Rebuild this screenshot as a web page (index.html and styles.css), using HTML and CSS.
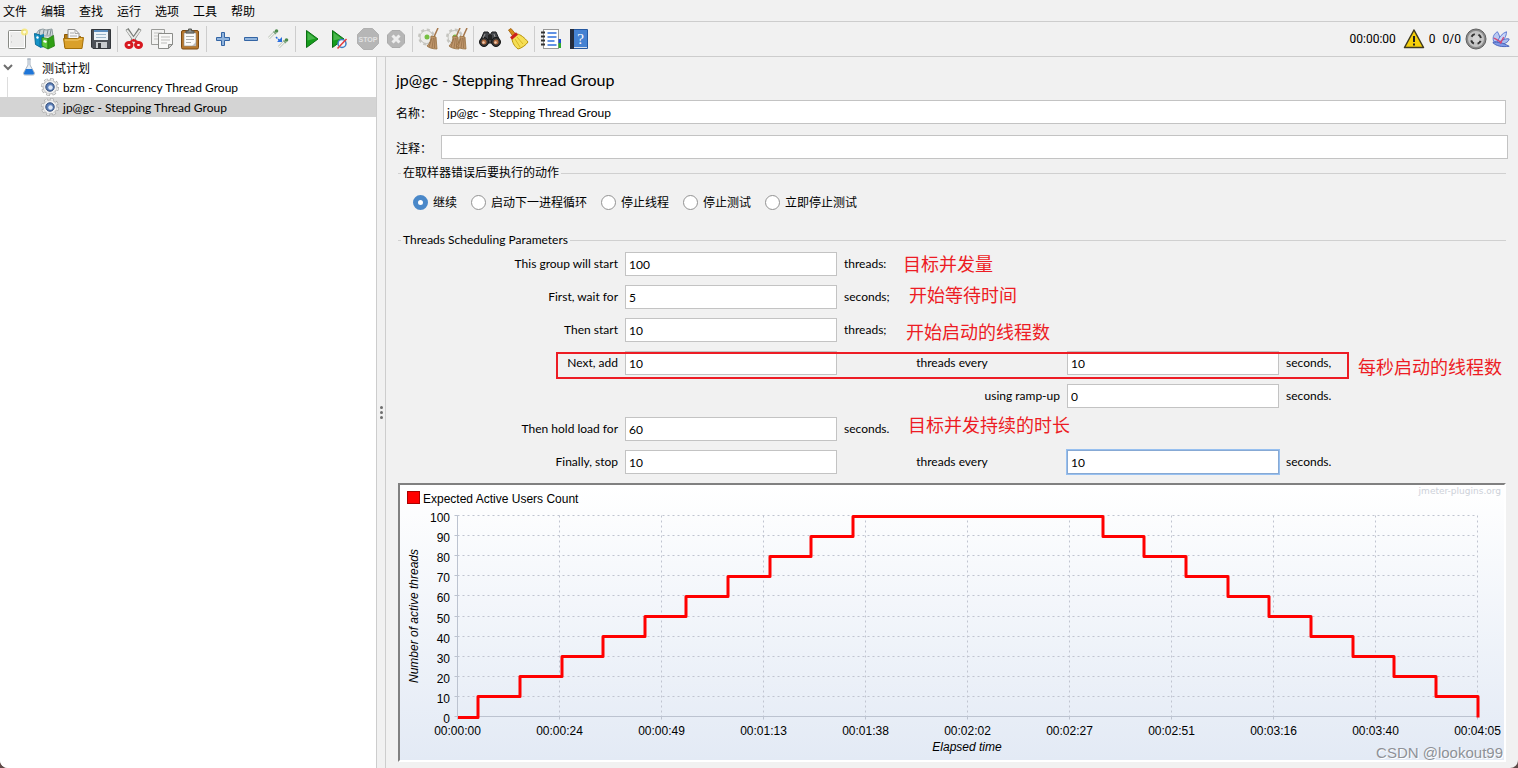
FILE: index.html
```html
<!DOCTYPE html>
<html lang="zh-CN">
<head>
    <meta charset="UTF-8">
    <meta name="viewport" content="width=device-width, initial-scale=1.0">
    <title>Apache JMeter</title>
    <link rel="stylesheet" href="styles.css">
</head>
<body>
    <div class="app">
        <nav class="menu-bar">
            <button>文件</button>
            <button>编辑</button>
            <button>查找</button>
            <button>运行</button>
            <button>选项</button>
            <button>工具</button>
            <button>帮助</button>
        </nav>

        <div class="toolbar">
            <button class="tool" aria-label="New">
                <svg viewBox="0 0 22 22"><rect x="2.500" y="2.500" width="17" height="18" rx="1" fill="#ececeb" stroke="#888a85"/><path d="M3.500 3.500h15v16h-15z" fill="none" stroke="#fff"/><path d="M5 8h1M5 14h1" stroke="#bbb"/><circle cx="18.500" cy="4" r="3.500" fill="#f7e66a" opacity=".8"/><circle cx="18.500" cy="4" r="1.500" fill="#fffde0"/></svg>
            </button>
            <button class="tool" aria-label="Templates">
                <svg viewBox="0 0 22 22"><path d="M2 6l3-4 4-1 3 1 6-1 1 7H3z" fill="#cdd6da" stroke="#7d8b91" stroke-width=".8"/><path d="M6 2l-1 5M10 2L9 7M14 2l-1 5M17 2l-1 5" stroke="#7d8b91"/><path d="M.500 5.500L6 7v12l-4.500-2.500z" fill="#1494c8" stroke="#0a6c98"/><path d="M6 7l4-1v13l-4 1z" fill="#0c7fae"/><path d="M8 9.500l6 1v10.500l-6-3z" fill="#5ccb3b" stroke="#267d10" stroke-width=".8"/><path d="M14 10.500l5.500-3L20.500 18 14 21z" fill="#2f9f14" stroke="#267d10" stroke-width=".8"/><path d="M2.500 9l2 1M9.500 13l3 1" stroke="#fff" stroke-width="2"/></svg>
            </button>
            <button class="tool" aria-label="Open">
                <svg viewBox="0 0 22 22"><path d="M2.500 19V6.500h5l1 2h10V19z" fill="#b37a10" stroke="#8f5902"/><path d="M6 12V1.500h7l4 4V12z" fill="#f7f7f7" stroke="#8e8e8e"/><path d="M13 1.500v4h4M8 5h4M8 8h7" stroke="#aaa" fill="none"/><path d="M1.500 10.500h14l2-1h4l-1.500 11h-17z" fill="#daa02a" stroke="#a4700a"/><path d="M3 12h13l2-1h2" stroke="#f5cd72" fill="none"/></svg>
            </button>
            <button class="tool" aria-label="Save">
                <svg viewBox="0 0 22 22"><path d="M1.500 1.500h19v19H3l-1.500-1.500z" fill="#4d5157" stroke="#33363a"/><rect x="4" y="2" width="14" height="10" fill="#edf3f8"/><path d="M4 3h14" stroke="#5d8fc0" stroke-width="2"/><path d="M6 6.500h10M6 9.500h10" stroke="#9db6ca"/><rect x="6" y="14" width="11" height="6" fill="#c9ccce"/><rect x="8" y="15" width="3" height="5" fill="#3b3e42"/></svg>
            </button>
            <span class="tool-sep"></span>
            <button class="tool" aria-label="Cut">
                <svg viewBox="0 0 22 22"><path d="M4 1l8 12M17 1L9 13" stroke="#777a76" stroke-width="3.500"/><path d="M4 2l8 11M17 2L9 13" stroke="#e8e9e7" stroke-width="2"/><ellipse cx="6" cy="17" rx="3" ry="2.500" fill="#fff" stroke="#d71920" stroke-width="3"/><ellipse cx="15.500" cy="17" rx="3" ry="2.500" fill="#fff" stroke="#d71920" stroke-width="3"/><path d="M7 14l3.500-2 4 2" stroke="#d71920" stroke-width="2" fill="none"/></svg>
            </button>
            <button class="tool" aria-label="Copy">
                <svg viewBox="0 0 22 22"><path d="M.500 1.500h13v15H.500z" fill="#f2f2f1" stroke="#9a9b98"/><path d="M3 5h8M3 8h4M3 11h4" stroke="#c2c2c0"/><path d="M7.500 5.500h14v11l-4 4h-10z" fill="#f8f8f7" stroke="#8b8c89"/><path d="M10 9h9M10 12h9M10 15h6" stroke="#bdbdbb"/><path d="M21.500 16.500h-4v4z" fill="#ccc" stroke="#8b8c89"/></svg>
            </button>
            <button class="tool" aria-label="Paste">
                <svg viewBox="0 0 22 22"><rect x="2.500" y="2.500" width="17" height="18.500" rx="1.500" fill="#b8782d" stroke="#7a4a12"/><path d="M5 5h12v13H5z" fill="#fbfbfa" stroke="#8e8f8c" stroke-width=".6"/><path d="M7 8.500h8M7 11.500h8M7 14.500h5" stroke="#aeb0ad"/><path d="M17 14v4h-4z" fill="#bbb"/><path d="M7 5V3h2.500V1h3v2H15v2z" fill="#8b8e88" stroke="#555753"/></svg>
            </button>
            <span class="tool-sep"></span>
            <button class="tool" aria-label="Expand all">
                <svg viewBox="0 0 22 22"><path d="M9.500 4.500h3v5h5v3h-5v5h-3v-5h-5v-3h5z" fill="#8fb3dc" stroke="#3465a4"/></svg>
            </button>
            <button class="tool" aria-label="Collapse all">
                <svg viewBox="0 0 22 22"><path d="M4.500 9.500h13v3h-13z" fill="#8fb3dc" stroke="#3465a4"/></svg>
            </button>
            <button class="tool" aria-label="Toggle">
                <svg viewBox="0 0 22 22"><use href="#pipette"/><use href="#pipette" x="10" y="9"/><path d="M8 9l4 4" stroke="#2a6ede" stroke-width="1.500" stroke-dasharray="2 1"/><path d="M14 9v5H9z" fill="#2a6ede"/></svg>
            </button>
            <span class="tool-sep"></span>
            <button class="tool" aria-label="Start">
                <svg viewBox="0 0 22 22"><path d="M5.500 2.500L17 11 5.500 19.500z" fill="#169c1c" stroke="#0b6e12"/><path d="M6.500 4.500l8 6-8 2z" fill="#48b64b"/></svg>
            </button>
            <button class="tool" aria-label="Start no pauses">
                <svg viewBox="0 0 22 22"><path d="M3.500 2.500L15 11 3.500 19.500z" fill="#169c1c" stroke="#0b6e12"/><path d="M4.500 4.500l8 6-8 2z" fill="#48b64b"/><circle cx="13" cy="15.500" r="4" fill="#f3f7fc" stroke="#3d7fc4" stroke-width="1.500"/><path d="M8.500 20.500l9-9.500" stroke="#e23b3b" stroke-width="1.500"/></svg>
            </button>
            <button class="tool" aria-label="Stop" disabled>
                <svg viewBox="0 0 22 22"><path d="M6.500.500h9l6 6v9l-6 6h-9l-6-6v-9z" fill="#b6b6b6" stroke="#b0b0b0"/><text x="11" y="14" class="stop-text">STOP</text></svg>
            </button>
            <button class="tool" aria-label="Shutdown" disabled>
                <svg viewBox="0 0 22 22"><path d="M7 2.500h8l4.500 4.500v8L15 19.500H7L2.500 15V7z" fill="#b6b6b6" stroke="#ababab"/><path d="M7.500 7.500l7 7M14.500 7.500l-7 7" stroke="#ededed" stroke-width="3"/></svg>
            </button>
            <span class="tool-sep"></span>
            <button class="tool" aria-label="Clear">
                <svg viewBox="0 0 22 22"><use href="#gear-grey"/><use href="#twigs"/></svg>
            </button>
            <button class="tool" aria-label="Clear all">
                <svg viewBox="0 0 22 22"><use href="#gear-grey"/><use href="#twigs" x="-6"/><use href="#twigs" x="1"/></svg>
            </button>
            <span class="tool-sep"></span>
            <button class="tool" aria-label="Search">
                <svg viewBox="0 0 22 22"><path d="M2 11l3-7h4l2 3 2-3h4l3 7v4H2z" fill="#44464a" stroke="#1e1f21"/><path d="M9 7h4v5H9z" fill="#222"/><circle cx="5" cy="14" r="4.500" fill="#333" stroke="#151515"/><circle cx="17" cy="14" r="4.500" fill="#333" stroke="#151515"/><circle cx="5" cy="14" r="2.500" fill="#b06a40"/><circle cx="17" cy="14" r="2.500" fill="#b06a40"/><circle cx="4.500" cy="14.500" r="1.200" fill="#f0cdb2"/><circle cx="16.500" cy="14.500" r="1.200" fill="#f0cdb2"/><path d="M6 6l-2 4M15 6l1 3" stroke="#999"/></svg>
            </button>
            <button class="tool" aria-label="Reset search">
                <svg viewBox="0 0 22 22"><path d="M1.500 2L4 .500l5 6-3 2z" fill="#d88b1c" stroke="#9a5b06" stroke-width=".8"/><path d="M5 10c2-1 4-3 5-4 3 0 8 4 11 8-2 3-6 6-10 7-4-3-6-7-6-11z" fill="#f5de55" stroke="#b79308"/><path d="M4 10.500l6-5" stroke="#cc1f1f" stroke-width="3"/><path d="M8 11l5 8M10 9l6 7" stroke="#d8b826"/></svg>
            </button>
            <span class="tool-sep"></span>
            <button class="tool" aria-label="Function helper">
                <svg viewBox="0 0 22 22"><rect x="3.500" y="1.500" width="15" height="19" fill="#fff" stroke="#999"/><path d="M18.500 11h2.500v4h-2.500z" fill="#1d4fd0"/><path d="M18.500 15h2.500v5h-2.500z" fill="#2da82d"/><path d="M7.500 5h9M7.500 9h9M7.500 13h7M7.500 17h9" stroke="#2f6fdc" stroke-width="1.500"/><path d="M1 4.500h4M1 8.500h4M1 12.500h4M1 16.500h4" stroke="#333" stroke-width="2"/></svg>
            </button>
            <button class="tool" aria-label="Help">
                <svg viewBox="0 0 22 22"><path d="M2.500 1.500h17v19h-17z" fill="#4582d2" stroke="#2558a0"/><path d="M2 1h4v20H2z" fill="#242c3c"/><path d="M6 19.500h13" stroke="#d7e0ee"/><text x="12.500" y="16" class="help-text">?</text></svg>
            </button>

            <div class="status">
                <span class="clock">00:00:00</span>
                <button class="warn" aria-label="Log errors">
                    <svg viewBox="0 0 22 22"><path d="M11 2L1.500 19.500h19z" fill="#f5cf0a" stroke="#3f3a20" stroke-width="1.500" stroke-linejoin="round"/><path d="M11 8v6M11 15.500v2" stroke="#222" stroke-width="2"/></svg>
                    <span>0</span>
                </button>
                <span>0/0</span>
                <svg class="status-icon" viewBox="0 0 22 22"><circle cx="11" cy="11" r="10" fill="#8a8a8a" stroke="#606060"/><circle cx="11" cy="11" r="8" fill="#c4c4c4"/><circle cx="11" cy="11" r="5" fill="none" stroke="#333" stroke-width="2" stroke-dasharray="4 3.850" stroke-dashoffset="-2"/><circle cx="11" cy="11" r="3.500" fill="#d4d4d4"/></svg>
                <svg class="status-icon small" viewBox="0 0 22 22"><path d="M3 14C1 8 4 5 7 3c2 3 3 6 3 10z" fill="#b9c9f2" stroke="#5271cf"/><path d="M7 14c2-5 5-9 10-11 0 5-2 8-7 12z" fill="#c8d5f7" stroke="#5271cf"/><path d="M8 15c4-3 9-5 12-4-1 4-6 6-11 6z" fill="#a9bcef" stroke="#4a67c4"/><path d="M2 15c5-1 11 0 18 4-8 1-14 0-18-4z" fill="#7e9be8" stroke="#4560b8"/><path d="M3 10c3 1 5 3 9 5M14 9l-4 7" stroke="#d24a78" fill="none" stroke-width="1.500"/></svg>
            </div>
        </div>

        <!-- shared icon parts -->
        <svg class="defs">
            <defs>
                <g id="pipette"><path d="M1 10l6-6" stroke="#b4beb1" stroke-width="2.500"/><path d="M1 10l6-6" stroke="#f3f6f1" stroke-width="1.200"/><path d="M5.500 3.500l2.500 2.500" stroke="#7ba37c" stroke-width="1.500"/><circle cx="8.500" cy="3" r="1.800" fill="#4c8b4c"/></g>
                <g id="gear-grey"><circle cx="8.500" cy="9" r="7" fill="none" stroke="#c6c6c1" stroke-width="3" stroke-dasharray="3 2.500"/><circle cx="8.500" cy="9" r="6.500" fill="#ededea" stroke="#c2c2bd"/><circle cx="9" cy="9" r="2.500" fill="#76c043"/></g>
                <g id="twigs"><path d="M20 0l-4 9" stroke="#a5764a" stroke-width="1.500"/><path d="M13 8l5 1 1 12c-4 0-8-1-10-3 3-3 4-6 4-10z" fill="#bf966b" stroke="#97703f" stroke-width=".8"/><path d="M14 10l-3 9M15.500 10l-1.500 10M17 10l-.500 10" stroke="#8a6540" stroke-width=".6"/></g>
                <g id="gear"><circle cx="9" cy="9" r="7.500" fill="none" stroke="#a2a2a2" stroke-width="3" stroke-dasharray="3.400 2.490"/><circle cx="9" cy="9" r="7" fill="#efefef" stroke="#b5b5b5"/><circle cx="9" cy="9" r="7.500" fill="none" stroke="#e9e9e9" stroke-width="2" stroke-dasharray="2.400 3.490" stroke-dashoffset="-.5"/><circle cx="9" cy="9" r="4.200" fill="#5f82ba" stroke="#2f4a78"/><circle cx="9.500" cy="9.500" r="2.200" fill="#dfe9f8"/></g>
                <linearGradient id="chart-bg" x1="0" y1="0" x2="0" y2="1"><stop offset="0" stop-color="#fff"/><stop offset="1" stop-color="#e3eaf5"/></linearGradient>
            </defs>
        </svg>

        <div class="workspace">
            <aside class="tree">
                <div class="tree-row root">
                    <svg class="chevron" viewBox="0 0 10 10"><path d="M1 3l4 4 4-4" fill="none" stroke="#6e6e6e" stroke-width="2"/></svg>
                    <svg class="tree-icon" viewBox="0 0 18 18"><path d="M7 1h4M8 1v6L3.500 15c0 1 0 2 2 2h7c2 0 2-1 2-2L10 7V1z" fill="#e8eef5" stroke="#a9b4c0"/><path d="M6 11h6l2 4c0 1-.500 1.500-2 1.500H6c-2 0-2-.500-2-1.500z" fill="#1f76d8"/></svg>
                    <span>测试计划</span>
                </div>
                <div class="tree-row child">
                    <svg class="tree-icon" viewBox="0 0 18 18"><use href="#gear"/></svg>
                    <span>bzm - Concurrency Thread Group</span>
                </div>
                <div class="tree-row child selected">
                    <svg class="tree-icon" viewBox="0 0 18 18"><use href="#gear"/></svg>
                    <span>jp@gc - Stepping Thread Group</span>
                </div>
            </aside>

            <div class="splitter"><i></i><i></i><i></i></div>

            <main class="editor">
                <h1>jp@gc - Stepping Thread Group</h1>
                <div class="field name-field">
                    <label for="name">名称：</label>
                    <input type="text" id="name" value="jp@gc - Stepping Thread Group">
                </div>
                <div class="field comment-field">
                    <label for="comment">注释：</label>
                    <input type="text" id="comment">
                </div>

                <fieldset>
                    <legend>在取样器错误后要执行的动作</legend>
                    <div class="on-error">
                        <label><input type="radio" name="on-error" checked>继续</label>
                        <label><input type="radio" name="on-error">启动下一进程循环</label>
                        <label><input type="radio" name="on-error">停止线程</label>
                        <label><input type="radio" name="on-error">停止测试</label>
                        <label><input type="radio" name="on-error">立即停止测试</label>
                    </div>
                </fieldset>

                <fieldset>
                    <legend>Threads Scheduling Parameters</legend>
                    <div class="params">
                        <label class="lead" for="total">This group will start</label>
                        <input type="text" id="total" value="100">
                        <span class="unit">threads:<b class="note note-total">目标并发量</b></span>

                        <label class="lead" for="delay">First, wait for</label>
                        <input type="text" id="delay" value="5">
                        <span class="unit">seconds;<b class="note note-delay">开始等待时间</b></span>

                        <label class="lead" for="burst">Then start</label>
                        <input type="text" id="burst" value="10">
                        <span class="unit">threads;<b class="note note-burst">开始启动的线程数</b></span>

                        <div class="highlight"></div>
                        <label class="lead" for="add">Next, add</label>
                        <input type="text" id="add" value="10">
                        <label class="mid" for="add-every">threads every</label>
                        <input type="text" id="add-every" value="10">
                        <span class="unit last">seconds,<b class="note note-add">每秒启动的线程数</b></span>

                        <label class="mid ramp" for="ramp">using ramp-up</label>
                        <input type="text" id="ramp" value="0">
                        <span class="unit last">seconds.</span>

                        <label class="lead" for="hold">Then hold load for</label>
                        <input type="text" id="hold" value="60">
                        <span class="unit">seconds.<b class="note note-hold">目标并发持续的时长</b></span>

                        <label class="lead" for="stop">Finally, stop</label>
                        <input type="text" id="stop" value="10">
                        <label class="mid" for="stop-every">threads every</label>
                        <input type="text" id="stop-every" class="focused" value="10">
                        <span class="unit last">seconds.</span>
                    </div>
                </fieldset>

                <div class="chart">
                    <svg viewBox="0 0 1104 275">
                        <rect width="1104" height="275" fill="url(#chart-bg)"/>
                        <rect x="7.500" y="6.500" width="12" height="12" fill="red" stroke="#a00"/>
                        <text x="23" y="18">Expected Active Users Count</text>
                        <text class="brand" x="1101" y="9">jmeter-plugins.org</text>
                        <text class="axis-title" transform="translate(18 131) rotate(-90)">Number of active threads</text>
                        <text class="axis-title" x="567" y="266">Elapsed time</text>
                        <g id="grid"></g>
                        <path id="series" class="series"/>
                    </svg>
                </div>
                <div class="watermark">CSDN @lookout99</div>
            </main>
        </div>
    </div>

    <script>
        const left = 57.5, right = 1077.5, top0 = 30.5, bottom = 231.5;
        const duration = 245;

        function xAt(t) {
            return Math.round(left + (right - left) * t / duration);
        }

        function yAt(n) {
            return Math.round(bottom - (bottom - top0) * n / 100) + 0.5;
        }

        function drawGrid() {
            const times = ['00:00:00', '00:00:24', '00:00:49', '00:01:13', '00:01:38', '00:02:02',
                '00:02:27', '00:02:51', '00:03:16', '00:03:40', '00:04:05'];
            let html = '';
            for (let i = 0; i <= 10; i++) {
                const y = Math.floor(bottom - i * 20.1) + 0.5;
                const x = left + i * 102;
                html += `<path class="grid-line" d="M${left} ${y}H${right}M${x} ${top0}V${bottom}"/>`;
                html += `<path class="axis" d="M${left - 3} ${y}h3M${x} ${bottom}v3"/>`;
                html += `<text class="y-label" x="50" y="${y + 6}">${i * 10}</text>`;
                html += `<text class="x-label" x="${x}" y="250">${times[i]}</text>`;
            }
            html += `<path class="axis" d="M${left} ${top0}V${bottom}H${right}"/>`;
            document.getElementById('grid').innerHTML = html;
        }

        function drawSeries() {
            // 5s wait, +10 every 10s, hold 60s, -10 every 10s
            let d = `M${xAt(0)} ${yAt(0)}H${xAt(5)}`;
            for (let n = 10; n <= 100; n += 10) {
                d += `V${yAt(n)}H${xAt(n < 100 ? n + 5 : 155)}`;
            }
            for (let n = 90; n >= 10; n -= 10) {
                d += `V${yAt(n)}H${xAt(155 + 100 - n)}`;
            }
            d += `V${yAt(0)}`;
            document.getElementById('series').setAttribute('d', d);
        }

        drawGrid();
        drawSeries();
    </script>
</body>
</html>
```
FILE: styles.css
```css
* {
    margin: 0;
    padding: 0;
    box-sizing: border-box;
}

html {
    background: #5f4a48;
}

body,
button,
input {
    font-family: Lato, 'Noto Sans CJK SC', sans-serif;
    font-size: 12px;
    color: #000;
}

button {
    border: none;
    background: none;
}

.app {
    display: flex;
    flex-direction: column;
    min-height: 100vh;
    background: #f1f1f1;
    border-radius: 0 0 8px 8px;
    overflow: hidden;
}

.defs {
    position: absolute;
    width: 0;
    height: 0;
}

/* menu and toolbar */
.menu-bar {
    display: flex;
    gap: 14px;
    height: 22px;
    padding: 0 3px;
    border-bottom: 1px solid #cdcdcd;
}

.toolbar {
    display: flex;
    align-items: center;
    height: 35px;
    padding: 0 7px 0 3px;
    border-bottom: 1px solid #cdcdcd;
}

.tool {
    display: flex;
    align-items: center;
    justify-content: center;
    width: 28px;
    height: 28px;
}

.tool svg,
.warn svg,
.status-icon {
    width: 22px;
    height: 22px;
}

.status-icon.small {
    width: 20px;
    height: 20px;
}

.tool-sep {
    width: 1px;
    height: 26px;
    margin: 0 2px;
    background: #cdcdcd;
}

.stop-text {
    font: bold 7px 'Liberation Sans', sans-serif;
    fill: #e2e2e2;
    text-anchor: middle;
}

.help-text {
    font: 15px 'Liberation Serif', serif;
    fill: #fff;
    text-anchor: middle;
}

.status {
    display: flex;
    align-items: center;
    gap: 4px;
    margin-left: auto;
    font-family: Roboto, sans-serif;
}

.warn {
    display: flex;
    align-items: center;
    gap: 4px;
    margin: 0 3px;
    font-family: Roboto, sans-serif;
}

/* tree */
.workspace {
    display: flex;
    flex: 1;
}

.tree {
    width: 376px;
    flex-shrink: 0;
    background: #fff;
}

.tree-row {
    display: flex;
    align-items: center;
    gap: 4px;
    height: 20px;
    padding-left: 3px;
}

.tree-row.child {
    margin-left: 7px;
    padding-left: 33px;
    border-left: 1px solid #ddd;
}

.tree-row.selected {
    margin-left: 0;
    padding-left: 41px;
    border-left: none;
    background: #d4d4d4;
}

.chevron {
    width: 10px;
    height: 10px;
    margin-right: 3px;
}

.tree-icon {
    width: 18px;
    height: 18px;
}

.splitter {
    display: flex;
    flex-direction: column;
    align-items: center;
    justify-content: center;
    gap: 2px;
    width: 10px;
    border: solid #cdcdcd;
    border-width: 0 1px;
}

.splitter i {
    width: 3px;
    height: 3px;
    border-radius: 50%;
    background: #6e6e6e;
}

/* editor */
.editor {
    position: relative;
    flex: 1;
    padding: 12px 10px 4px;
}

h1 {
    font-size: 16px;
    font-weight: 400;
    line-height: 22px;
}

input[type="text"] {
    height: 24px;
    padding: 0 3px;
    border: 1px solid #c3c3c3;
    background: #fff;
    outline: none;
}

input.focused {
    border-color: #87a9d4;
    box-shadow: 0 0 0 1px #97c0f0;
}

.field {
    display: flex;
    align-items: center;
    gap: 11px;
}

.field input {
    flex: 1;
}

.name-field {
    margin: 9px 2px 11px 0;
}

.comment-field {
    gap: 9px;
    margin-bottom: 5px;
}

fieldset {
    margin: 0 2px;
    border: none;
    border-top: 1px solid #d0d0d0;
}

legend {
    margin-left: 3px;
    padding: 0 2px;
    line-height: 18px;
}

.on-error {
    display: flex;
    gap: 14px;
    padding: 12px 15px 20px;
}

.on-error label {
    display: flex;
    align-items: center;
    gap: 5px;
    line-height: 17px;
}

input[type="radio"] {
    appearance: none;
    width: 15px;
    height: 15px;
    border: 1px solid #929292;
    border-radius: 50%;
    background: #fff;
}

input[type="radio"]:checked {
    border: 5px solid #4a88c9;
}

.params {
    position: relative;
    display: grid;
    grid-template-columns: 105px 212px 216px 212px 105px;
    gap: 9px 7px;
    align-items: center;
    justify-content: center;
    padding: 3px 0 9px;
    line-height: 18px;
    white-space: nowrap;
}

.lead {
    grid-column: 1;
    text-align: right;
}

.mid {
    text-align: center;
}

.ramp {
    grid-column: 3;
    text-align: right;
}

.unit {
    position: relative;
    grid-column: 3;
}

.unit.last {
    grid-column: 5;
}

/* red marks over the form */
.note {
    position: absolute;
    top: -4px;
    font-size: 18px;
    font-weight: 400;
    line-height: 26px;
    color: #ed1c24;
}

.note-total {
    left: 59px;
}

.note-delay {
    left: 65px;
    top: -6px;
}

.note-burst {
    left: 62px;
    top: -2px;
}

.note-add {
    left: 72px;
    top: 0;
}

.note-hold {
    left: 64px;
    top: -8px;
}

.highlight {
    position: absolute;
    top: 103px;
    left: 50%;
    width: 793px;
    height: 27px;
    margin-left: -396px;
    border: 2px solid #ed1c24;
    pointer-events: none;
}

/* chart */
.chart {
    margin: 0 2px;
    border: 2px solid;
    border-color: #808080 #fff #fff #808080;
}

.chart svg {
    display: block;
    width: 100%;
}

.chart text {
    font-family: 'Liberation Sans', sans-serif;
    font-size: 12px;
}

.chart .brand {
    font-family: 'DejaVu Sans', sans-serif;
    font-size: 9px;
    fill: #cdd1d9;
    text-anchor: end;
}

.chart .axis-title {
    font-style: italic;
    text-anchor: middle;
}

.chart .y-label {
    text-anchor: end;
}

.chart .x-label {
    text-anchor: middle;
}

.grid-line {
    fill: none;
    stroke: #c0c4d0;
    stroke-dasharray: 2 3;
}

.axis {
    fill: none;
    stroke: #bcc3d0;
}

.series {
    fill: none;
    stroke: #f00;
    stroke-width: 3;
    stroke-linejoin: round;
}

.watermark {
    position: absolute;
    right: 15px;
    bottom: 4px;
    font: 15px/22px 'Liberation Sans', sans-serif;
    color: #8e9197;
    text-shadow: 1px 1px #fff;
}
```
